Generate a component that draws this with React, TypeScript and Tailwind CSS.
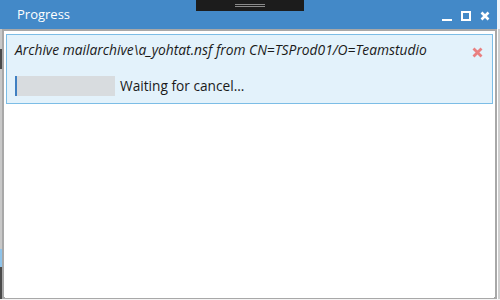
import React from 'react';

const font = { fontFamily: '"Open Sans", "Noto Sans", sans-serif' };

export default function App() {
  return (
    <div className="w-[500px] h-[300px] overflow-hidden bg-[#f0f0f0] flex flex-col" style={font}>
      <div className="flex h-[29px] shrink-0">
        <div className="relative w-[497px] bg-[#4389c8] flex items-center">
          <span className="ml-[17px] mt-[1px] text-[13px] text-white">Progress</span>
          {/* drag handle */}
          <div className="absolute left-[196px] top-0 w-[108px] h-[11px] bg-[#1c1c1c] flex flex-col items-center justify-center gap-[1px]">
            <div className="w-[30px] h-px bg-[#8a8a8a]" />
            <div className="w-[30px] h-px bg-[#8a8a8a]" />
          </div>
          <div className="ml-auto mr-[7px] mt-[2px] flex items-center gap-[9px]">
            <div className="w-[10px] h-[10px] flex items-end">
              <div className="w-[10px] h-[2px] bg-white" />
            </div>
            <div className="w-[10px] h-[10px] border-2 border-white" />
            <svg width="10" height="10" viewBox="0 0 10 10">
              <path d="M1.5 1.5 L8.5 8.5 M8.5 1.5 L1.5 8.5" stroke="white" strokeWidth="2.6" />
            </svg>
          </div>
        </div>
        <div className="flex-1 bg-[#eef4fa]" />
      </div>
      <div className="flex flex-1 min-h-0">
        <div className="w-[2px] flex flex-col">
          <div className="h-[20px] bg-[#c8c8c8]" />
          <div className="h-[20px] bg-[#4a4a4a]" />
          <div className="h-[180px] bg-[#c8c8c8]" />
          <div className="h-[18px] bg-[#8ec3ea]" />
          <div className="flex-1 bg-[#4a4a4a]" />
        </div>
        <div className="w-[495px] border-2 border-[#a8a8a8] bg-white p-px">
          <div className="h-full w-full bg-white">
            <div className="mx-px mt-[2px] h-[70px] bg-[#e3f2fb] border border-[#7cbde6] pl-[8px] pr-[9px]">
              <div className="flex items-start pt-[5px]">
                <span className="text-[13.8px] italic text-[#1a1a1a]">
                  Archive mailarchive\a_yohtat.nsf from CN=TSProd01/O=Teamstudio
                </span>
                <svg className="ml-auto mt-[7px]" width="11" height="11" viewBox="0 0 11 11">
                  <path d="M1.5 1.5 L9.5 9.5 M9.5 1.5 L1.5 9.5" stroke="#e98080" strokeWidth="2.8" />
                </svg>
              </div>
              <div className="flex items-center mt-[15px]">
                <div className="w-[100px] h-[20px] bg-[#d8dcdf] border-l-2 border-[#3f80c2]" />
                <span className="ml-[5px] text-[13.7px] text-[#1a1a1a]">Waiting for cancel...</span>
              </div>
            </div>
          </div>
        </div>
        <div className="flex-1 bg-[#d0d0d0] border-l border-white" />
      </div>
      <div className="h-[1px] bg-[#f4f4f4]" />
    </div>
  );
}
